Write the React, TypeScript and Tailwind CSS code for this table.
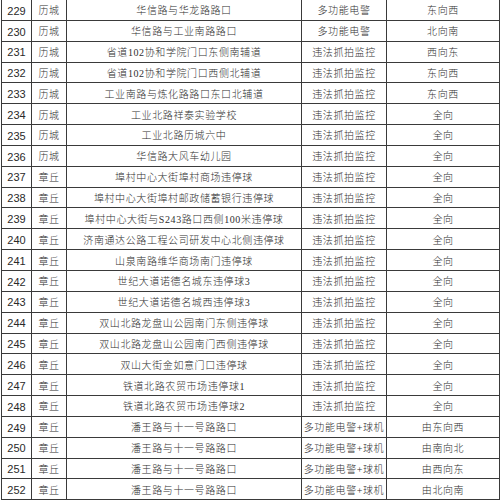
const ROWS: [number, string, string, string, string][] = [
  [229, "历城", "华信路与华龙路路口", "多功能电警", "东向西"],
  [230, "历城", "华信路与工业南路路口", "多功能电警", "北向南"],
  [231, "历城", "省道102协和学院门口东侧南辅道", "违法抓拍监控", "西向东"],
  [232, "历城", "省道102协和学院门口西侧北辅道", "违法抓拍监控", "东向西"],
  [233, "历城", "工业南路与炼化路路口东口北辅道", "违法抓拍监控", "东向西"],
  [234, "历城", "工业北路祥泰实验学校", "违法抓拍监控", "全向"],
  [235, "历城", "工业北路历城六中", "违法抓拍监控", "全向"],
  [236, "历城", "华信路大风车幼儿园", "违法抓拍监控", "全向"],
  [237, "章丘", "埠村中心大街埠村商场违停球", "违法抓拍监控", "全向"],
  [238, "章丘", "埠村中心大街埠村邮政储蓄银行违停球", "违法抓拍监控", "全向"],
  [239, "章丘", "埠村中心大街与S243路口西侧100米违停球", "违法抓拍监控", "全向"],
  [240, "章丘", "济南通达公路工程公司研发中心北侧违停球", "违法抓拍监控", "全向"],
  [241, "章丘", "山泉南路维华商场南门违停球", "违法抓拍监控", "全向"],
  [242, "章丘", "世纪大道诺德名城东违停球3", "违法抓拍监控", "全向"],
  [243, "章丘", "世纪大道诺德名城西违停球3", "违法抓拍监控", "全向"],
  [244, "章丘", "双山北路龙盘山公园南门东侧违停球", "违法抓拍监控", "全向"],
  [245, "章丘", "双山北路龙盘山公园南门西侧违停球", "违法抓拍监控", "全向"],
  [246, "章丘", "双山大街金如意门口违停球", "违法抓拍监控", "全向"],
  [247, "章丘", "铁道北路农贸市场违停球1", "违法抓拍监控", "全向"],
  [248, "章丘", "铁道北路农贸市场违停球2", "违法抓拍监控", "全向"],
  [249, "章丘", "潘王路与十一号路路口", "多功能电警+球机", "由东向西"],
  [250, "章丘", "潘王路与十一号路路口", "多功能电警+球机", "由南向北"],
  [251, "章丘", "潘王路与十一号路路口", "多功能电警+球机", "由西向东"],
  [252, "章丘", "潘王路与十一号路路口", "多功能电警+球机", "由北向南"],
];

// thin grid lines, every cell draws its own right and bottom edge
const cell =
  "flex items-center justify-center border-r border-b border-[#3a3a3a] overflow-hidden whitespace-nowrap pt-[2px]";
const cjk =
  "font-['Liberation_Serif','Noto_Sans_CJK_SC',serif] font-light text-[10px] tracking-[0.6px] text-[#303030]";

export default function App() {
  return (
    <div className="h-[502px] w-[500px] bg-white">
      <div className="ml-px grid grid-cols-[30px_35px_235px_85px_113px] auto-rows-[20.85px] border-l border-[#3a3a3a]">
        {ROWS.map(([no, district, place, kind, direction]) => (
          <div className="contents" key={no}>
            <div className={`${cell} font-['Liberation_Sans',sans-serif] text-[11px] text-[#2a2a2a]`}>{no}</div>
            <div className={`${cell} ${cjk}`}>{district}</div>
            <div className={`${cell} ${cjk}`}>{place}</div>
            <div className={`${cell} ${cjk}`}>{kind}</div>
            <div className={`${cell} ${cjk}`}>{direction}</div>
          </div>
        ))}
      </div>
    </div>
  );
}
